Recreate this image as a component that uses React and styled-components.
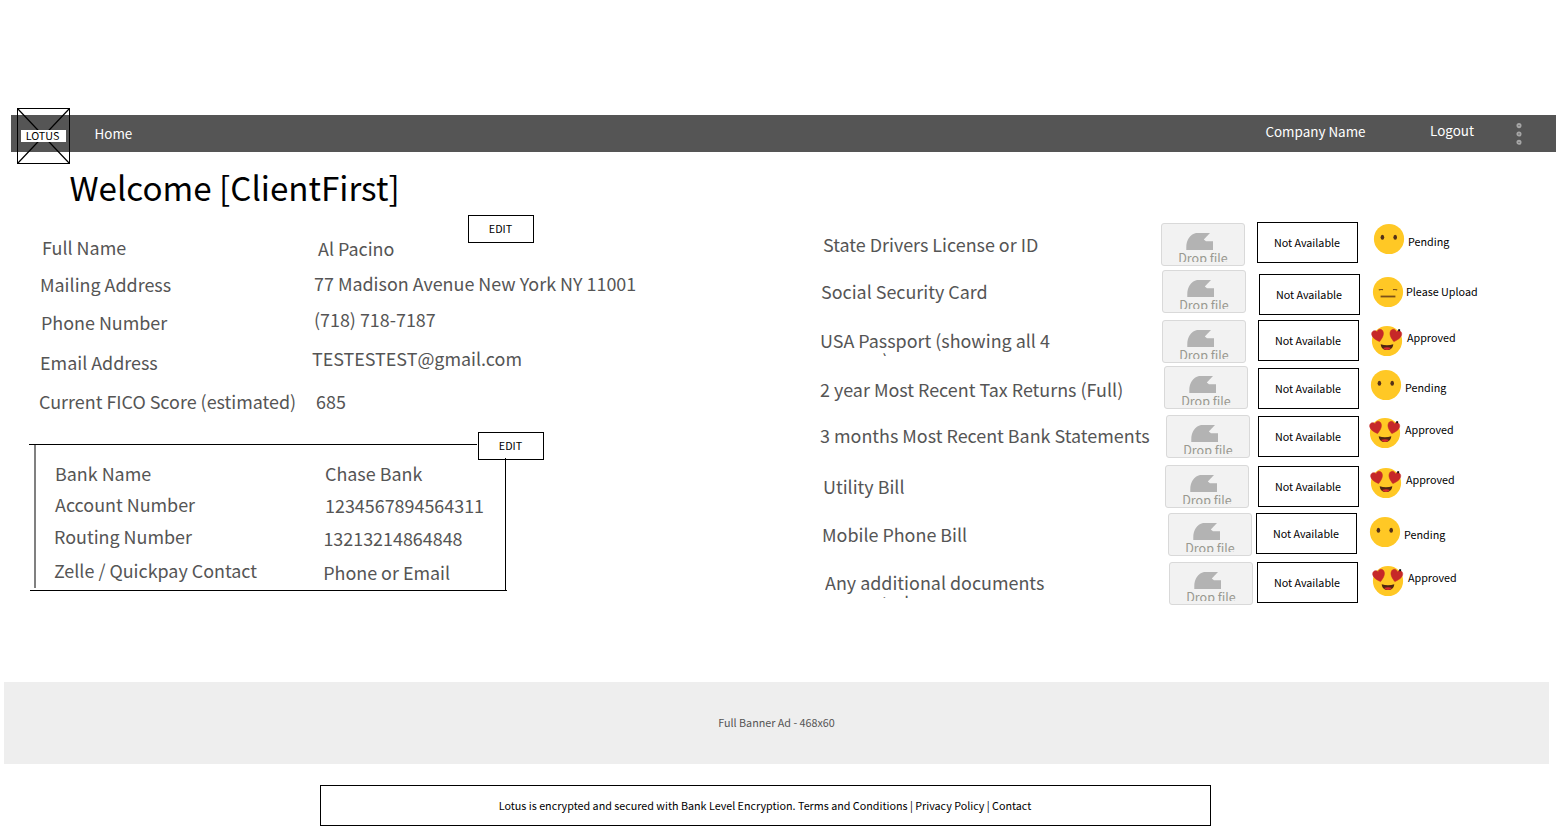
import React from "react";
import styled, { createGlobalStyle } from "styled-components";

const GlobalStyle = createGlobalStyle`
  *, *::before, *::after { box-sizing: border-box; }
  body {
    margin: 0;
    background: #fff;
    font-family: "Noto Sans CJK SC", "Noto Sans", sans-serif;
    color: #000;
  }
`;

const Page = styled.div`
  display: flex;
  flex-direction: column;
  height: 826px;
  overflow: hidden;
  padding-top: 115px;
`;

const NavBar = styled.header`
  display: flex;
  align-items: flex-start;
  flex: none;
  height: 37px;
  margin: 0 10px 0 11px;
  padding-left: 6px;
  background: #555;
`;

const Logo = styled.div`
  display: grid;
  flex: none;
  width: 53px;
  height: 56px;
  margin-top: -7px;
  place-items: center;

  > * { grid-area: 1 / 1; }
`;

const LogoName = styled.span`
  width: 45px;
  height: 12px;
  margin-right: 1px;
  padding-right: 1px;
  background: #fff;
  font-size: 10.75px;
  line-height: 11px;
  text-align: center;
`;

const NavLink = styled.a`
  flex: none;
  margin: ${(p) => p.$top}px 0 0 ${(p) => p.$left}px;
  color: #fff;
  font-size: 13.43px;
  line-height: 20px;
  white-space: nowrap;
`;

const NavGroup = styled.nav`
  display: flex;
  align-items: flex-start;
  margin-left: auto;
`;

const MenuDots = styled.svg`
  flex: none;
  margin: 7px 34.5px 0 41.5px;
`;

const Title = styled.h1`
  flex: none;
  height: 52px;
  margin: 9px 0 2px 69.5px;
  font-size: 33.15px;
  font-weight: 400;
  line-height: 52px;
`;

const Columns = styled.main`
  display: grid;
  flex: none;
  grid-template-columns: 820px 1fr;
  height: 467px;
`;

const Column = styled.section`
  display: flex;
  flex-direction: column;
`;

const Text = styled.div`
  padding: ${(p) => p.$y || 0}px 0 0 ${(p) => p.$x || 0}px;
  color: #555;
  font-size: 17.91px;
  line-height: 20px;
  white-space: nowrap;
`;

const ProfileFields = styled.div`
  display: flex;
  flex-direction: column;
  height: 190px;
  margin-top: -6px;
`;

const FieldRow = styled.div`
  display: grid;
  flex: none;
  grid-template-columns: ${(p) => p.$label}px auto;
  justify-content: start;
  height: ${(p) => p.$height}px;
`;

const EditButton = styled.button`
  display: flex;
  flex: none;
  align-items: center;
  justify-content: center;
  width: 66px;
  height: 28px;
  padding: 0 1px 1px 0;
  border: 1px solid #000;
  background: #fff;
  color: #000;
  font: inherit;
  font-size: 10.75px;
`;

const ProfileEdit = styled(EditButton)`
  margin-left: 468px;
`;

const BankPanel = styled.div`
  position: relative;
  width: 478px;
  height: 147px;
  margin: 17px 0 0 29px;
  padding: 19px 0 0 25px;
`;

const PanelTop = styled.i`
  position: absolute;
  top: 0;
  left: 0;
  width: 448px;
  height: 1px;
  background: #000;
`;

const PanelBottom = styled.i`
  position: absolute;
  bottom: 0;
  left: 1px;
  width: 477px;
  height: 1px;
  background: #000;
`;

const PanelLeft = styled.i`
  position: absolute;
  top: 1px;
  left: 5px;
  width: 2px;
  height: 143px;
  background: #808080;
`;

const PanelRight = styled.i`
  position: absolute;
  top: 14px;
  right: 1px;
  width: 1px;
  height: 133px;
  background: #000;
`;

const BankEdit = styled(EditButton)`
  position: absolute;
  top: -12px;
  left: 449px;
`;

const DocumentList = styled(Column)`
  padding-top: 7px;
`;

const DocumentRow = styled.div`
  display: grid;
  flex: none;
  grid-template-columns: 341px 95px 113px 35px auto;
  align-items: start;
  justify-content: start;
  height: ${(p) => p.$height}px;
`;

const Cell = styled.div`
  padding: ${(p) => p.$y}px 0 0 ${(p) => p.$x}px;
`;

const DocumentName = styled.div`
  max-width: ${(p) => (p.$wrap ? "240px" : "none")};
  height: 26px;
  overflow: ${(p) => (p.$wrap ? "hidden" : "visible")};
  color: #555;
  font-size: 17.91px;
  line-height: 20px;
  white-space: ${(p) => (p.$wrap ? "normal" : "nowrap")};
`;

const DropZone = styled.div`
  width: 84px;
  height: 43px;
  padding: 9px 0 0;
  border: 1px solid #d9d9d9;
  border-radius: 3px;
  background: #f2f2f2;

  svg { display: block; margin-left: 24px; }
`;

const DropLabel = styled.div`
  height: 12px;
  overflow: hidden;
  color: #999990;
  font-size: 12.54px;
  line-height: 16px;
  text-align: center;
`;

const Availability = styled.div`
  display: flex;
  align-items: center;
  justify-content: center;
  width: 101px;
  height: 41px;
  padding-right: 1px;
  border: 1px solid #000;
  background: #fff;
  font-size: 10.75px;
  line-height: 16px;
`;

const Status = styled.div`
  font-size: 10.75px;
  line-height: 16px;
  white-space: nowrap;
`;

const Face = styled.svg`
  display: block;
  overflow: visible;
`;

const Banner = styled.aside`
  display: flex;
  flex: none;
  align-items: center;
  justify-content: center;
  width: 1545px;
  height: 82px;
  margin-left: 4px;
  padding-bottom: 2px;
  background: #eee;
  color: #555;
  font-size: 10.75px;
`;

const Footer = styled.footer`
  display: flex;
  flex: none;
  align-items: center;
  justify-content: center;
  width: 891px;
  height: 41px;
  margin: 21px 0 0 320px;
  padding-right: 1px;
  border: 1px solid #000;
  font-size: 10.75px;
`;

const Heart = ({ x, turn }) => (
  <path
    transform={`translate(${x} 9.4) rotate(${turn})`}
    d="M0 6.4 C-2.6 4.2 -5.9 1.5 -5.9 -1.9 C-5.9 -5.9 -1.2 -6.8 0 -3.4 C1.2 -6.8 5.9 -5.9 5.9 -1.9 C5.9 1.5 2.6 4.2 0 6.4Z"
    fill="#c62828"
    stroke="#c62828"
    strokeWidth="0.5"
  />
);

function Emoji({ kind }) {
  return (
    <Face width="31" height="31" viewBox="0 0 31 31">
      <circle cx="16" cy="15" r="15.1" fill="#ffc825" />
      {kind === "pending" && (
        <g fill="#543018">
          <ellipse cx="9.4" cy="13.2" rx="1.8" ry="2.5" />
          <ellipse cx="22.2" cy="13.2" rx="1.8" ry="2.5" />
        </g>
      )}
      {kind === "upload" && (
        <g fill="none" stroke="#7b5018">
          <path d="M6.8 12.9Q8.8 12.2 11 12.7M21 12.7Q23 12.2 25.2 12.9" strokeWidth="1.2" />
          <path d="M8.6 19.5H23.4" strokeWidth="1.8" />
        </g>
      )}
      {kind === "approved" && (
        <>
          <Heart x={7} turn={-14} />
          <Heart x={24.4} turn={14} />
          <path d="M9.7 18.2Q16 20.2 22.3 18.2C22 22 19.6 24 16 24S10 22 9.7 18.2Z" fill="#4e2512" />
          <path d="M12 22.1Q16 20.3 20 22.1Q18.4 24 16 24T12 22.1Z" fill="#d72b2b" />
          <rect x="27.2" y="3.2" width="1.9" height="2" fill="#111" />
        </>
      )}
    </Face>
  );
}

const profile = [
  { label: "Full Name", lx: 42, ly: 0, value: "Al Pacino", vx: 6, vy: 1, h: 36 },
  { label: "Mailing Address", lx: 40, ly: 1, value: "77 Madison Avenue New York NY 11001", vx: 2, vy: 0, h: 36 },
  { label: "Phone Number", lx: 41, ly: 3, value: "(718) 718-7187", vx: 2, vy: 0, h: 39 },
  { label: "Email Address", lx: 40, ly: 4, value: "TESTESTEST@gmail.com", vx: 0, vy: 0, h: 43 },
  { label: "Current FICO Score (estimated)", lx: 39, ly: 0, value: "685", vx: 4, vy: 0, h: 30 },
];

const bank = [
  { label: "Bank Name", lx: 1, ly: 0, value: "Chase Bank", vx: 2, vy: 0, h: 31 },
  { label: "Account Number", lx: 1, ly: 0, value: "1234567894564311", vx: 2, vy: 1, h: 32 },
  { label: "Routing Number", lx: 0, ly: 0, value: "13213214864848", vx: 0.4, vy: 2, h: 34 },
  { label: "Zelle / Quickpay Contact", lx: 0, ly: 0, value: "Phone or Email", vx: 0.2, vy: 2, h: 24 },
];

const statusText = { pending: "Pending", upload: "Please Upload", approved: "Approved" };

/* Each pair is the inset of a cell's content from the start of its column and row. */
const documents = [
  { name: "State Drivers License or ID", kind: "pending", h: 48, n: [3, 12], d: [0, 1], a: [1, 0], f: [4, 2], s: [4, 12] },
  { name: "Social Security Card", kind: "upload", h: 50, n: [1, 11], d: [1, 0], a: [3, 4], f: [3, 7], s: [2, 14] },
  { name: "USA Passport (showing all 4 corners)", wrap: true, kind: "approved", h: 46, n: [0, 10], d: [1, 0], a: [2, 0], f: [2, 6], s: [3, 10] },
  { name: "2 year Most Recent Tax Returns (Full)", kind: "pending", h: 49, n: [0, 13], d: [3, 0], a: [2, 2], f: [1, 4], s: [1, 14] },
  { name: "3 months Most Recent Bank Statements", kind: "approved", h: 50, n: [0, 10], d: [5, 0], a: [2, 1], f: [0, 3], s: [1, 7] },
  { name: "Utility Bill", kind: "approved", h: 48, n: [3, 11], d: [4, 0], a: [2, 1], f: [1, 3], s: [2, 7] },
  { name: "Mobile Phone Bill", kind: "pending", h: 49, n: [2, 11], d: [7, 0], a: [0, 0], f: [0, 4], s: [0, 14] },
  { name: "Any additional documents requested", wrap: true, kind: "approved", h: 48, n: [5, 10], d: [8, 0], a: [1, 0], f: [3, 4], s: [4, 8] },
];

function Fields({ items, labelWidth }) {
  return items.map((f) => (
    <FieldRow key={f.label} $label={labelWidth} $height={f.h}>
      <Text $x={f.lx} $y={f.ly}>{f.label}</Text>
      <Text $x={f.vx} $y={f.vy}>{f.value}</Text>
    </FieldRow>
  ));
}

export default function App() {
  return (
    <Page>
      <GlobalStyle />
      <NavBar>
        <Logo>
          <svg width="53" height="56" fill="none" stroke="#000">
            <rect x="0.5" y="0.5" width="52" height="55" />
            <path d="M.5 .5L52.5 55.5M52.5 .5L.5 55.5" strokeWidth="1.2" />
          </svg>
          <LogoName>LOTUS</LogoName>
        </Logo>
        <NavLink $top={8} $left={24.5}>Home</NavLink>
        <NavGroup>
          <NavLink $top={6} $left={0}>Company Name</NavLink>
          <NavLink $top={5} $left={64.5}>Logout</NavLink>
          <MenuDots width="6" height="24" fill="none" stroke="#a6a6a6" strokeWidth="1.9">
            <circle cx="3" cy="3.6" r="1.6" />
            <circle cx="3" cy="12" r="1.6" />
            <circle cx="3" cy="20.3" r="1.6" />
          </MenuDots>
        </NavGroup>
      </NavBar>
      <Title>Welcome [ClientFirst]</Title>
      <Columns>
        <Column>
          <ProfileEdit>EDIT</ProfileEdit>
          <ProfileFields>
            <Fields items={profile} labelWidth={312} />
          </ProfileFields>
          <BankPanel>
            <PanelTop />
            <PanelLeft />
            <PanelBottom />
            <BankEdit>EDIT</BankEdit>
            <PanelRight />
            <Fields items={bank} labelWidth={269} />
          </BankPanel>
        </Column>
        <DocumentList>
          {documents.map((doc) => (
            <DocumentRow key={doc.name} $height={doc.h}>
              <Cell $x={doc.n[0]} $y={doc.n[1]}>
                <DocumentName $wrap={doc.wrap}>{doc.name}</DocumentName>
              </Cell>
              <Cell $x={doc.d[0]} $y={doc.d[1]}>
                <DropZone>
                  <svg width="28" height="17" viewBox="0 0 28 17">
                    <path d="M0.3 17V14.5C0.3 7 4 1.5 10 0H24L17.8 6.5L20 8.2H27V17Z" fill="#b3b3b3" />
                  </svg>
                  <DropLabel>Drop file</DropLabel>
                </DropZone>
              </Cell>
              <Cell $x={doc.a[0]} $y={doc.a[1]}>
                <Availability>Not Available</Availability>
              </Cell>
              <Cell $x={doc.f[0]} $y={doc.f[1]}>
                <Emoji kind={doc.kind} />
              </Cell>
              <Cell $x={doc.s[0]} $y={doc.s[1]}>
                <Status>{statusText[doc.kind]}</Status>
              </Cell>
            </DocumentRow>
          ))}
        </DocumentList>
      </Columns>
      <Banner>Full Banner Ad - 468x60</Banner>
      <Footer>Lotus is encrypted and secured with Bank Level Encryption. Terms and Conditions | Privacy Policy | Contact</Footer>
    </Page>
  );
}
